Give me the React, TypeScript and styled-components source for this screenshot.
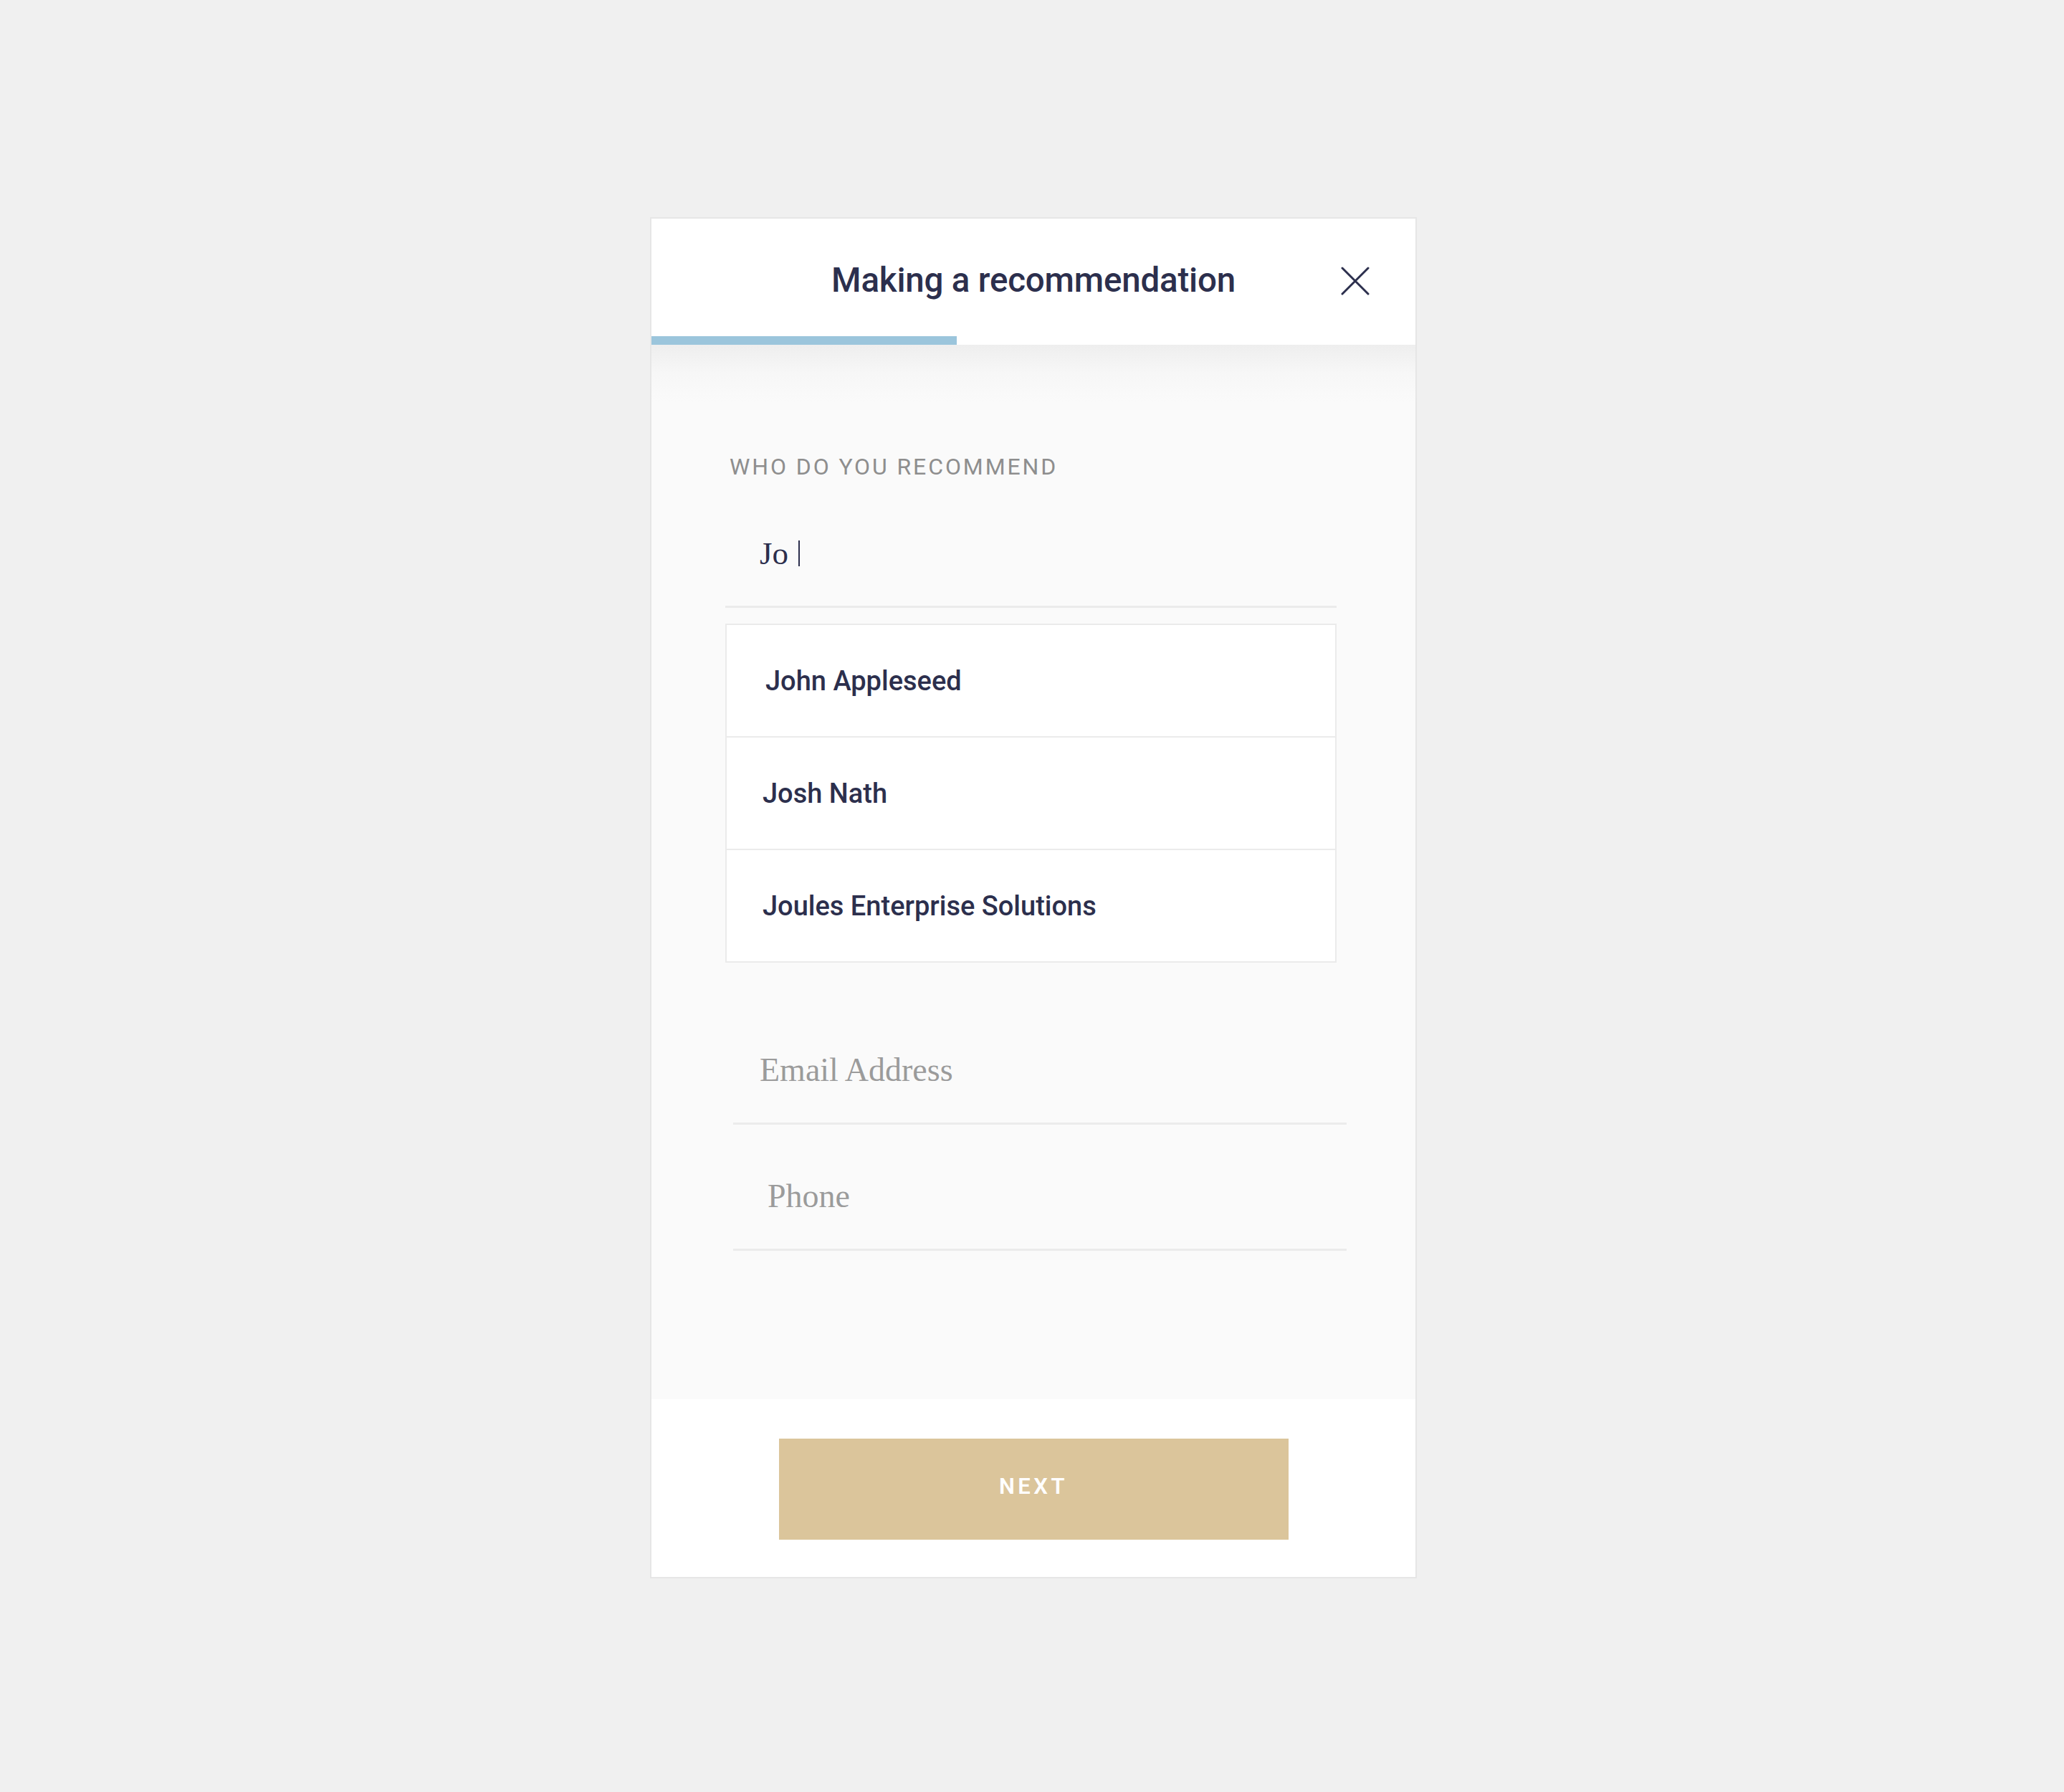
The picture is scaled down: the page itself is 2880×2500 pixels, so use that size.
import styled, { createGlobalStyle } from "styled-components";

const GlobalStyle = createGlobalStyle`
  body {
    margin: 0;
    background: #f0f0f0;
    font-family: Roboto, "Liberation Sans", sans-serif;
  }
`;

const navy = "#2c2f4d";
const line = "#ebebeb";

const suggestions = ["John Appleseed", "Josh Nath", "Joules Enterprise Solutions"];

export default function App() {
  return (
    <>
      <GlobalStyle />
      <Page>
        <Card>
          <Header>
            <Title>Making a recommendation</Title>
            <Close aria-label="Close">
              <svg width="40" height="40" viewBox="0 0 40 40">
                <path
                  d="M2 2 L38 38 M38 2 L2 38"
                  stroke={navy}
                  strokeWidth="3"
                  strokeLinecap="round"
                />
              </svg>
            </Close>
            <Progress>
              <ProgressFill style={{ width: "40%" }} />
            </Progress>
          </Header>

          <Body>
            <Label>Who do you recommend</Label>
            <Field>
              <Value>
                Jo
                <Caret />
              </Value>
            </Field>

            <Suggestions>
              {suggestions.map((name) => (
                <Suggestion key={name}>{name}</Suggestion>
              ))}
            </Suggestions>

            <Contact>
              <Field $inset={37}>
                <Placeholder>Email Address</Placeholder>
              </Field>
              <Field $inset={48}>
                <Placeholder>Phone</Placeholder>
              </Field>
            </Contact>
          </Body>

          <Footer>
            <NextButton>Next</NextButton>
          </Footer>
        </Card>
      </Page>
    </>
  );
}

const Page = styled.main`
  min-height: 2500px;
  box-sizing: border-box;
  padding: 303px 0 0 4px;
  display: flex;
  justify-content: center;
  align-items: flex-start;
`;

const Card = styled.section`
  width: 1070px;
  box-sizing: border-box;
  background: #fff;
  border: 2px solid #e6e6e6;
  display: flex;
  flex-direction: column;
`;

const Header = styled.header`
  position: relative;
  height: 176px;
  display: flex;
  flex-direction: column;
  background: #fff;
`;

const Title = styled.h1`
  flex: 1;
  margin: 0;
  padding-top: 8px;
  display: flex;
  align-items: center;
  justify-content: center;
  font-size: 47.5px;
  font-weight: 500;
  color: ${navy};
  letter-spacing: -0.2px;
`;

const Close = styled.button`
  position: absolute;
  top: 67px;
  right: 64px;
  width: 40px;
  height: 40px;
  padding: 0;
  border: none;
  background: none;
  display: flex;
`;

const Progress = styled.div`
  height: 12px;
  background: #fff;
`;

const ProgressFill = styled.div`
  height: 100%;
  background: #9bc5dc;
`;

const Body = styled.div`
  padding: 154px 110px 207px 103px;
  background: linear-gradient(to bottom, #eeeeee 0, #f7f7f7 40px, #fafafa 80px);
  display: flex;
  flex-direction: column;
`;

const Label = styled.div`
  padding-left: 6px;
  font-size: 32px;
  line-height: 32px;
  letter-spacing: 2.9px;
  text-transform: uppercase;
  color: #8e8e8e;
  margin-bottom: 31px;
`;

const Field = styled.div<{ $inset?: number }>`
  height: 147px;
  border-bottom: 3px solid ${line};
  display: flex;
  align-items: center;
  padding-left: ${(p) => p.$inset ?? 48}px;
`;

const Value = styled.div`
  display: flex;
  align-items: center;
  font-family: "Liberation Serif", serif;
  font-size: 45px;
  color: ${navy};
`;

const Caret = styled.span`
  width: 2px;
  height: 36px;
  margin-left: 14px;
  background: ${navy};
`;

const Placeholder = styled.div`
  font-family: "Liberation Serif", serif;
  font-size: 46px;
  color: #9b9b9b;
`;

const Suggestions = styled.ul`
  list-style: none;
  margin: 22px 0 0;
  padding: 0;
  background: #fff;
  border: 2px solid ${line};
`;

const Suggestion = styled.li<{ $inset?: number }>`
  height: 155px;
  display: flex;
  align-items: center;
  padding-left: 50px;
  font-size: 38px;
  font-weight: 500;
  color: ${navy};

  &:first-child {
    padding-left: 54px;
  }

  & + & {
    border-top: 2px solid ${line};
  }
`;

const Contact = styled.div`
  margin: 76px -14px 0 11px;
  display: flex;
  flex-direction: column;
  gap: 26px;
`;

const Footer = styled.footer`
  padding: 55px 0 52px;
  display: flex;
  justify-content: center;
  background: #fff;
`;

const NextButton = styled.button`
  width: 711px;
  height: 141px;
  border: none;
  background: #dbc59b;
  color: #fff;
  font-family: Roboto, "Liberation Sans", sans-serif;
  font-size: 31px;
  font-weight: 600;
  letter-spacing: 4.5px;
  text-transform: uppercase;
  padding-bottom: 10px;
`;
